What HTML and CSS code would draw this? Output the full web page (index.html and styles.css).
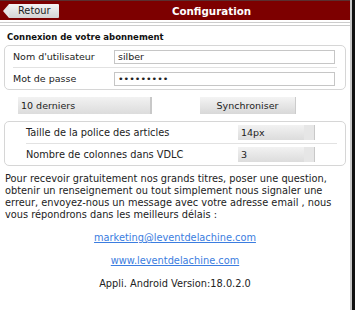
FILE: index.html
```html
<!DOCTYPE html>
<html lang="fr">
<head>
    <meta charset="UTF-8">
    <meta name="viewport" content="width=device-width, initial-scale=1.0">
    <title>Configuration</title>
    <link rel="stylesheet" href="styles.css">
</head>
<body>
    <div class="page">
        <header class="topbar">
            <a class="back-btn" href="#">Retour</a>
            <h1>Configuration</h1>
        </header>
        <div class="topbar-rule"></div>

        <h2 class="section-title">Connexion de votre abonnement</h2>
        <div class="group">
            <div class="row">
                <span class="row-label">Nom d'utilisateur</span>
                <input class="field" type="text" value="silber">
            </div>
            <div class="row">
                <span class="row-label">Mot de passe</span>
                <input class="field" type="password" value="123456789">
            </div>
        </div>

        <div class="sync-line">
            <div class="select wide">10 derniers</div>
            <button class="btn">Synchroniser</button>
        </div>

        <div class="group prefs">
            <div class="row">
                <span class="row-label">Taille de la police des articles</span>
                <div class="select small">14px</div>
            </div>
            <div class="row">
                <span class="row-label">Nombre de colonnes dans VDLC</span>
                <div class="select small">3</div>
            </div>
        </div>

        <p class="info">Pour recevoir gratuitement nos grands titres, poser une question, obtenir un renseignement ou tout simplement nous signaler une erreur, envoyez-nous un message avec votre adresse email , nous vous répondrons dans les meilleurs délais :</p>

        <p class="center"><a href="#">marketing@leventdelachine.com</a></p>
        <p class="center"><a href="#">www.leventdelachine.com</a></p>
        <p class="center version">Appli. Android Version:18.0.2.0</p>
    </div>
</body>
</html>
```

FILE: styles.css
```css
:root {
    --header-red: #7d0000;
    --text-color: #222;
    --border: #d6d6d6;
    --link: #3b7de0;
}

html, body {
    margin: 0;
    padding: 0;
    height: 100%;
    background: #fff;
}

body {
    font-family: "DejaVu Sans", Verdana, sans-serif;
    font-size: 9px;
    color: var(--text-color);
}

.page {
    width: 352px;
    min-height: 310px;
    border-right: 2px solid #c8c8c8;
    box-shadow: 3px 0 0 #111;
    box-sizing: border-box;
    overflow: hidden;
}

.topbar {
    display: flex;
    align-items: center;
    height: 20px;
    background: var(--header-red);
    border-top: 1px solid #5a3030;
    box-sizing: border-box;
}

.back-btn {
    position: relative;
    display: block;
    width: 41px;
    height: 14px;
    line-height: 14px;
    margin-left: 9px;
    padding-left: 9px;
    font-size: 9.8px;
    color: #222;
    text-decoration: none;
    background: linear-gradient(#f4f4f4, #d4d4d4);
    border-radius: 0 1px 1px 0;
}

.back-btn::before {
    content: '';
    position: absolute;
    left: -6px;
    top: 0;
    border-right: 6px solid #e6e6e6;
    border-top: 7px solid transparent;
    border-bottom: 7px solid transparent;
}

.topbar h1 {
    flex: 1;
    margin: 0;
    text-align: center;
    font-size: 10.3px;
    font-weight: bold;
    color: #fff;
    padding-left: 14px;
}

.topbar-rule {
    height: 2px;
    margin-top: 2px;
    border-top: 1px solid #ccc;
    border-bottom: 1px solid #ccc;
}

.section-title {
    margin: 6px 0 3px 7px;
    font-size: 8.5px;
    font-weight: bold;
    color: #111;
}

.group {
    margin: 0 4px 0 4px;
    border: 1px solid var(--border);
    border-radius: 5px;
    padding: 0 8px 0 8px;
}

.row {
    display: flex;
    align-items: center;
    height: 21px;
}

.row + .row {
    border-top: 1px solid #e2e2e2;
}

.row-label {
    width: 101px;
    font-size: 9.5px;
}

.field {
    flex: 1;
    height: 14px;
    padding: 0 3px;
    border: 1px solid #c6c6c6;
    font-family: inherit;
    font-size: 9.5px;
    color: #222;
    box-sizing: border-box;
    margin-right: 2px;
}

.sync-line {
    display: flex;
    align-items: center;
    padding: 7px 0 7px 18px;
}

.select {
    height: 17px;
    line-height: 17px;
    padding-left: 3px;
    box-sizing: border-box;
    font-size: 9.5px;
    background: linear-gradient(#f2f2f2, #dcdcdc);
    border-right: 2px solid #c8c8c8;
}

.select.wide {
    width: 134px;
}

.btn {
    margin-left: 48px;
    width: 96px;
    height: 17px;
    padding: 0;
    border: none;
    border-right: 1px solid #ccc;
    font-family: inherit;
    font-size: 9.5px;
    color: #222;
    background: linear-gradient(#f4f4f4, #d8d8d8);
}

.prefs {
    padding-left: 21px;
}

.prefs .row-label {
    width: 212px;
    font-size: 9.8px;
}

.select.small {
    width: 77px;
    height: 15px;
    line-height: 15px;
    border-right: 1px solid #c8c8c8;
    box-shadow: inset -10px 0 0 #e6e6e6;
}

.info {
    margin: 7px 14px 0 5px;
    font-size: 9.8px;
    line-height: 12px;
}

.center {
    margin: 12px 0 0;
    text-align: center;
    font-size: 9.8px;
}

.info + .center {
    margin-top: 11px;
}

.center a {
    color: var(--link);
}

.version {
    color: #222;
}
```
